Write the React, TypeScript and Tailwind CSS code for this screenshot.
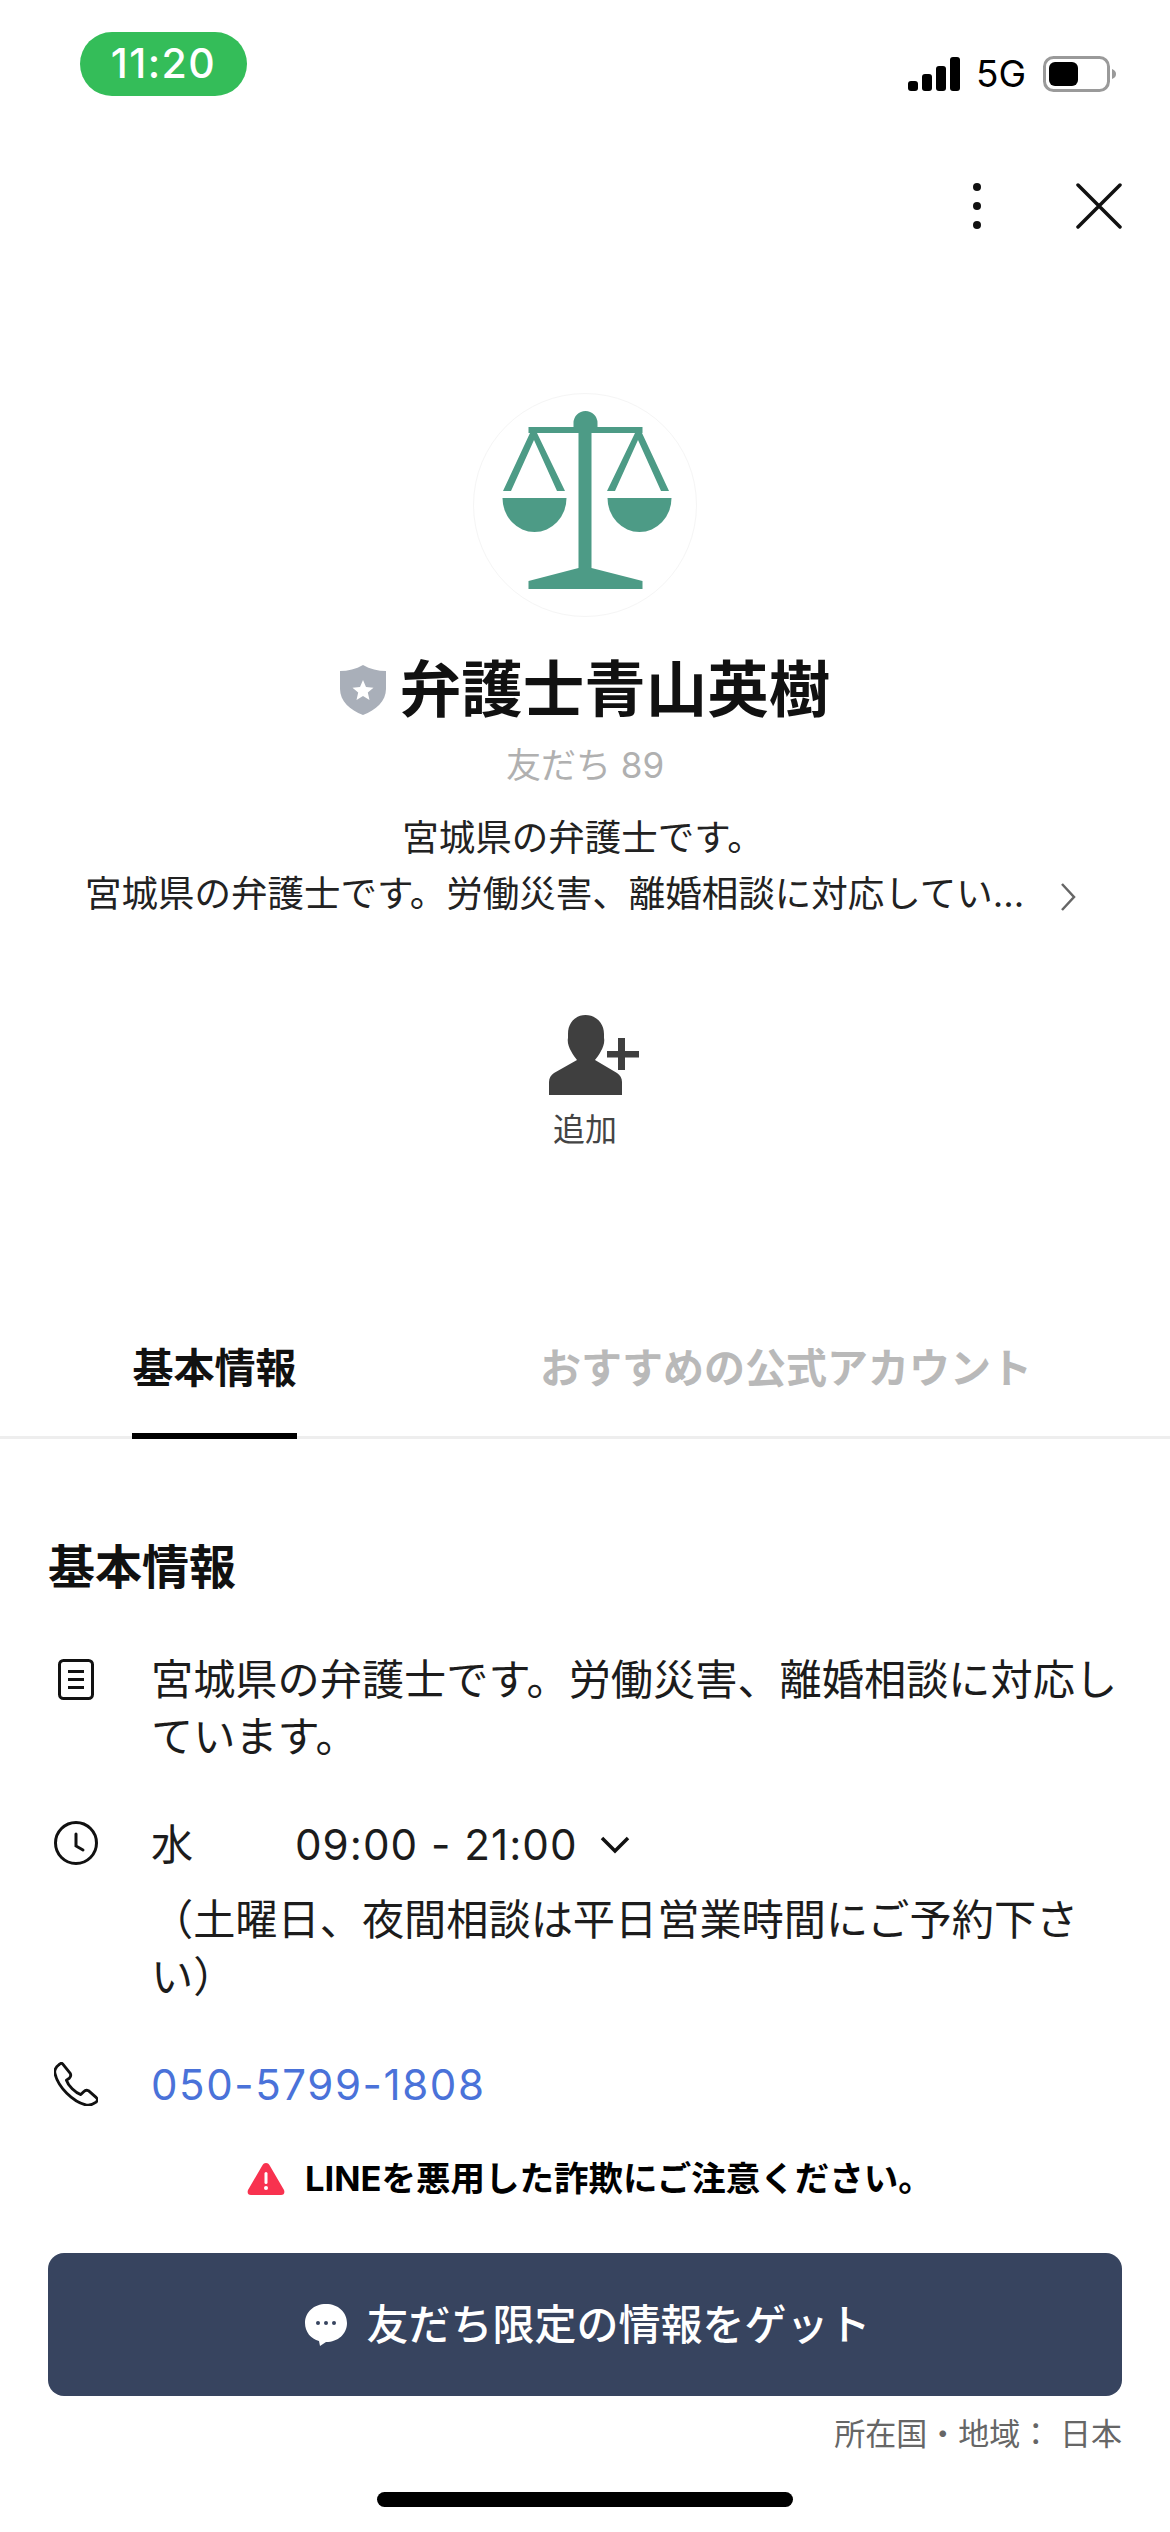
import React from "react";

const Scale = () => (
  <svg viewBox="0 0 217 224" className="w-[217px] h-[224px]" fill="#4d9b86">
    <path d="M96.500 34V30a12 12 0 0 1 24 0v4h45v6h-51v135h-13V40h-50v-6z" />
    <path d="M101.500 175h13l51 13v8h-114v-8z" />
    <path d="M26 98h8l23-51 23 51h8L60 40h-7z" />
    <path d="M130 98h8l23-51 23 51h8L165 40h-7z" />
    <path d="M25.500 105h64a32 34 0 0 1-64 0z" />
    <path d="M130.500 105h64a32 34 0 0 1-64 0z" />
  </svg>
);

export default function App() {
  return (
    <div className="w-[1170px] h-[2532px] bg-white flex flex-col text-[#111] overflow-hidden font-['Inter','Noto_Sans_CJK_JP',sans-serif]">
      {/* status bar */}
      <div className="flex items-start justify-between pt-[32px] pl-[80px] pr-[53px] h-[100px]">
        <div className="w-[167px] h-[64px] rounded-[32px] bg-[#34bd59] flex items-center justify-center text-white text-[41px] font-medium tracking-[1.500px]">
          11:20
        </div>
        <div className="flex items-center mt-[24px] h-[36px]">
          <svg viewBox="0 0 52 34" className="w-[52px] h-[34px]" fill="#000">
            <rect x="0" y="24" width="10" height="10" rx="3" />
            <rect x="14" y="17" width="10" height="17" rx="3" />
            <rect x="28" y="9" width="10" height="25" rx="3" />
            <rect x="42" y="0" width="10" height="34" rx="3" />
          </svg>
          <span className="text-[37px] ml-[16px] w-[50px] text-black">5G</span>
          <svg viewBox="0 0 74 36" className="w-[74px] h-[36px] ml-[17px]">
            <rect x="1.500" y="1.500" width="64" height="33" rx="9" fill="none" stroke="#9a9a9a" strokeWidth="3" />
            <rect x="6" y="6" width="29" height="24" rx="6" fill="#000" />
            <path d="M69 13c3 1 4 3 4 5s-1 4-4 5z" fill="#9a9a9a" />
          </svg>
        </div>
      </div>

      {/* actions */}
      <div className="flex justify-end items-center h-[60px] mt-[76px] pr-[48px] gap-[95px]">
        <div className="flex flex-col gap-[11px]">
          <div className="w-[8px] h-[8px] rounded-full bg-[#111]" />
          <div className="w-[8px] h-[8px] rounded-full bg-[#111]" />
          <div className="w-[8px] h-[8px] rounded-full bg-[#111]" />
        </div>
        <svg viewBox="0 0 46 46" className="w-[46px] h-[46px]" fill="none" stroke="#111" strokeWidth="3.500" strokeLinecap="round">
          <path d="M2 2l42 42M44 2L2 44" />
        </svg>
      </div>

      {/* avatar */}
      <div className="self-center mt-[157px] w-[224px] h-[224px] rounded-full border border-[#f5f5f5] flex items-center justify-center">
        <Scale />
      </div>

      {/* title */}
      <div className="flex items-center justify-center mt-[38px] h-[70px] gap-[14px]">
        <svg viewBox="0 0 46 50" className="w-[46px] h-[50px]">
          <path d="M0 6c8 0 16-2 23-6 7 4 15 6 23 6v18c0 12-10 21-23 26C10 45 0 36 0 24z" fill="#a9afb9" />
          <path d="M23 15l3 7 7.500.7-5.700 4.900 1.700 7.300L23 30.900l-6.500 4 1.700-7.300-5.700-4.900 7.500-.7z" fill="#fff" />
        </svg>
        <span className="text-[61.500px] font-bold leading-none">弁護士青山英樹</span>
      </div>

      <div className="text-center text-[35px] text-[#b0b0b0] mt-[18px] leading-[44px]">友だち 89</div>

      <div className="text-center text-[36.500px] leading-[56px] text-[#222] mt-[23px] pr-[4px]">宮城県の弁護士です。</div>
      <div className="flex items-center pl-[85px] text-[36.500px] leading-[56px] text-[#222]">
        <span>宮城県の弁護士です。労働災害、離婚相談に対応してい...</span>
        <svg viewBox="0 0 16 30" className="w-[16px] h-[30px] ml-[36px] mt-[6px]" fill="none" stroke="#666" strokeWidth="2.500">
          <path d="M2 2l12 13L2 28" />
        </svg>
      </div>

      {/* add */}
      <div className="flex flex-col items-center mt-[93px] self-center">
        <svg viewBox="0 0 90 80" className="w-[90px] h-[80px] ml-[17px]" fill="#3f3f3f">
          <path d="M36.500 0C47 0 55 8 55 19v4c1 4-1 10-3 13-2 4-4 6-6 9l22 13c3 2 5 5 5 9v13H0V67c0-4 2-7 5-9l23-13c-2-3-4-5-6-9-2-3-4-9-3-13v-4C19 8 26 0 36.500 0z" />
          <path d="M69 23h7v13h14v6.500H76V55h-7V42.500H58V36h11z" />
        </svg>
        <div className="text-[32px] text-[#444] leading-[44px] mt-[13px]">追加</div>
      </div>

      {/* tabs */}
      <div className="flex items-stretch h-[101px] mt-[186px] border-b-[3px] border-[#eeeeee] text-[41px] font-bold leading-[60px]">
        <div className="ml-[132px] w-[165px] h-[101px] text-center border-b-[6px] border-black">基本情報</div>
        <div className="ml-[243px] text-[#b9b9b9]">おすすめの公式アカウント</div>
      </div>

      {/* info */}
      <div className="px-[48px]">
        <h2 className="text-[47px] font-bold leading-[60px] mt-[98px]">基本情報</h2>

        <div className="flex mt-[54px]">
          <div className="w-[56px] shrink-0 flex justify-center pt-[8px]">
            <svg viewBox="0 0 36 41" className="w-[36px] h-[41px]" fill="none" stroke="#111" strokeWidth="3">
              <rect x="1.500" y="1.500" width="33" height="38" rx="4" />
              <path d="M10 12.500h16M10 20.500h16M10 28.500h16" />
            </svg>
          </div>
          <p className="ml-[47px] text-[42.200px] leading-[57px] text-[#1c1c1c]">
            宮城県の弁護士です。労働災害、離婚相談に対応しています。
          </p>
        </div>

        <div className="flex mt-[51px]">
          <div className="w-[56px] shrink-0 flex justify-center pt-[5px]">
            <svg viewBox="0 0 44 44" className="w-[44px] h-[44px]" fill="none" stroke="#111" strokeWidth="3">
              <circle cx="22" cy="22" r="20.500" />
              <path d="M22 13v12l7 4" strokeLinecap="round" />
            </svg>
          </div>
          <div className="ml-[47px] text-[42.200px] leading-[57px] text-[#1c1c1c]">
            <div className="flex items-center">
              <span className="w-[144px]">水</span>
              <span className="tracking-[1px]">09:00 - 21:00</span>
              <svg viewBox="0 0 30 18" className="w-[30px] h-[18px] ml-[22px]" fill="none" stroke="#111" strokeWidth="3.500">
                <path d="M2 2l13 13L28 2" />
              </svg>
            </div>
            <p className="mt-[18px]">（土曜日、夜間相談は平日営業時間にご予約下さい）</p>
          </div>
        </div>

        <div className="flex mt-[51px]">
          <div className="w-[56px] shrink-0 flex justify-center pt-[6px]">
            <svg viewBox="0 0 46 46" className="w-[44px] h-[44px]" fill="none" stroke="#111" strokeWidth="3" strokeLinejoin="round">
              <path d="M9 2l8 10c1 2 1 3-1 5l-3 2c2 6 9 13 15 15l3-3c2-2 3-2 5-1l8 7c2 2 2 3 0 5-3 2-6 4-10 3C20 42 4 26 1 12 0 9 2 5 5 3c2-2 3-2 4-1z" />
            </svg>
          </div>
          <div className="ml-[47px] text-[42px] leading-[57px] text-[#4a72d9] tracking-[1.600px]">050-5799-1808</div>
        </div>

        <div className="flex items-center justify-center mt-[44px] h-[44px] pl-[10px]">
          <svg viewBox="0 0 38 32" className="w-[38px] h-[32px]">
            <path d="M19 0c2 0 3 1 4 3l14 24c1 3 0 5-3 5H4c-3 0-4-2-3-5L15 3c1-2 2-3 4-3z" fill="#f8324f" />
            <rect x="17.500" y="9" width="3" height="12" rx="1.500" fill="#fff" />
            <circle cx="19" cy="25" r="2" fill="#fff" />
          </svg>
          <span className="ml-[20px] text-[34.500px] font-bold text-black">LINEを悪用した詐欺にご注意ください。</span>
        </div>

        <button className="mt-[52px] w-full h-[143px] rounded-[16px] bg-[#37445f] flex items-center justify-center text-white pl-[6px]">
          <svg viewBox="0 0 42 42" className="w-[42px] h-[42px]">
            <path d="M21 0c12 0 21 8 21 19S33 38 21 38l-6 4-1-5C6 35 0 28 0 19 0 8 9 0 21 0z" fill="#fff" />
            <circle cx="13" cy="19" r="2" fill="#37445f" />
            <circle cx="21" cy="19" r="2" fill="#37445f" />
            <circle cx="29" cy="19" r="2" fill="#37445f" />
          </svg>
          <span className="ml-[19px] text-[42px] font-medium">友だち限定の情報をゲット</span>
        </button>

        <div className="text-right text-[31px] text-[#666] leading-[44px] mt-[16px]">所在国・地域： 日本</div>
      </div>

      {/* home indicator */}
      <div className="self-center w-[416px] h-[15px] rounded-full bg-black mt-[36px]" />
    </div>
  );
}
